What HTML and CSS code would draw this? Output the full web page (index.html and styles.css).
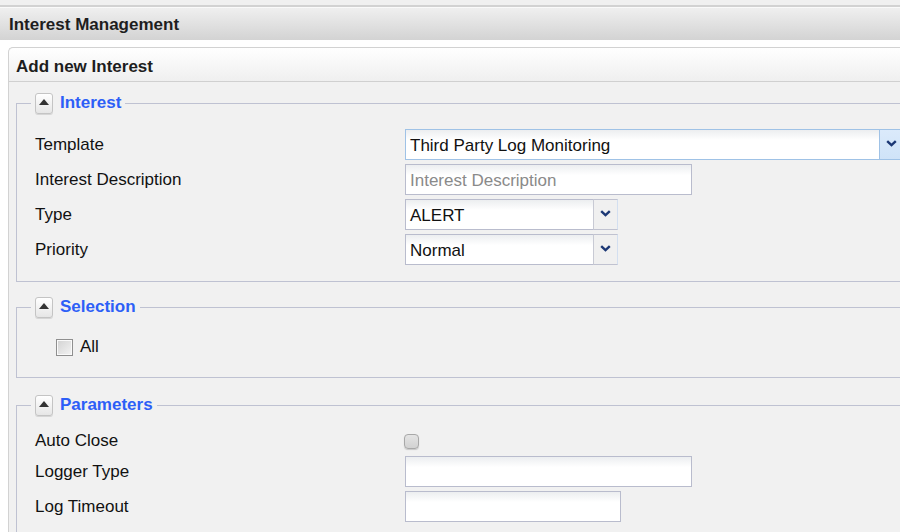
FILE: index.html
```html
<!DOCTYPE html>
<html>
<head>
<meta charset="utf-8">
<link rel="stylesheet" href="styles.css">
</head>
<body>
<div class="app">
  <div class="titlebar">Interest Management</div>
  <div class="panel">
    <div class="panel-head">Add new Interest</div>
    <div class="panel-body">
      <fieldset class="fs fs-interest">
        <legend><span class="toggle"><span class="tri"></span></span><span class="legend-text">Interest</span></legend>
        <div class="row">
          <div class="label">Template</div>
          <div class="combo combo-wide focused">
            <div class="field">Third Party Log Monitoring</div>
            <div class="dd"><svg width="11" height="7" viewBox="0 0 11 7"><path d="M1.2 1.2 L5.5 5.2 L9.8 1.2" fill="none" stroke="#1c3875" stroke-width="2.4"/></svg></div>
          </div>
        </div>
        <div class="row">
          <div class="label">Interest Description</div>
          <div class="field text w286 placeholder">Interest Description</div>
        </div>
        <div class="row">
          <div class="label">Type</div>
          <div class="combo combo-small">
            <div class="field">ALERT</div>
            <div class="dd"><svg width="11" height="7" viewBox="0 0 11 7"><path d="M1.2 1.2 L5.5 5.2 L9.8 1.2" fill="none" stroke="#1c3875" stroke-width="2.4"/></svg></div>
          </div>
        </div>
        <div class="row">
          <div class="label">Priority</div>
          <div class="combo combo-small">
            <div class="field">Normal</div>
            <div class="dd"><svg width="11" height="7" viewBox="0 0 11 7"><path d="M1.2 1.2 L5.5 5.2 L9.8 1.2" fill="none" stroke="#1c3875" stroke-width="2.4"/></svg></div>
          </div>
        </div>
      </fieldset>

      <fieldset class="fs fs-selection">
        <legend><span class="toggle"><span class="tri"></span></span><span class="legend-text">Selection</span></legend>
        <div class="check-row">
          <span class="checkbox"></span><span class="check-label">All</span>
        </div>
      </fieldset>

      <fieldset class="fs fs-params">
        <legend><span class="toggle"><span class="tri"></span></span><span class="legend-text">Parameters</span></legend>
        <div class="row row-check">
          <div class="label">Auto Close</div>
          <span class="checkbox-round"></span>
        </div>
        <div class="row">
          <div class="label">Logger Type</div>
          <div class="field text w286"></div>
        </div>
        <div class="row">
          <div class="label">Log Timeout</div>
          <div class="field text w215"></div>
        </div>
      </fieldset>
    </div>
  </div>
</div>
</body>
</html>
```

FILE: styles.css
```css
html, body {
  margin: 0;
  padding: 0;
  background: #ffffff;
  overflow: hidden;
  font-family: "Liberation Sans", Arial, sans-serif;
  color: #111;
}

.app {
  border-top: 5px solid #f0f0f0;
  width: 940px;
}

.titlebar {
  border-top: 2px solid #d2d2d2;
  height: 35px;
  box-sizing: border-box;
  padding: 8px 0 0 9px;
  background: linear-gradient(#f0f0f0, #d3d3d3);
  font-size: 17px;
  font-weight: bold;
  color: #1e1e1e;
  box-shadow: inset 0 1px 0 #fafafa;
}

.panel {
  margin: 7px 0 0 8px;
  border: 1px solid #d2d2d2;
  border-right: none;
  border-radius: 5px 0 0 0;
  background: #f1f1f1;
  height: 600px;
}

.panel-head {
  height: 34px;
  box-sizing: border-box;
  padding: 9px 0 0 7px;
  background: linear-gradient(#ffffff, #efefef);
  border-bottom: 1px solid #d0d0d0;
  border-radius: 5px 0 0 0;
  font-size: 17px;
  font-weight: bold;
  color: #1e1e1e;
}

.panel-body {
  padding: 10px 0 0 7px;
}

.fs {
  margin: 0;
  border: 1px solid #bfc2d2;
  border-right: none;
  padding: 0 0 0 14px;
  min-width: 0;
}

.fs legend {
  padding: 0 4px;
  display: flex;
  align-items: center;
  height: 22px;
}

.toggle {
  width: 16px;
  height: 19px;
  border: 1px solid #c4c4c4;
  border-radius: 3px;
  background: linear-gradient(#ffffff, #e6e6e6);
  box-shadow: 0 1px 0 #d6d6d6;
  display: flex;
  align-items: center;
  justify-content: center;
}

.tri {
  width: 0;
  height: 0;
  border-left: 5px solid transparent;
  border-right: 5px solid transparent;
  border-bottom: 6px solid #333;
  margin-top: -2px;
}

.legend-text {
  margin-left: 7px;
  font-size: 17px;
  font-weight: bold;
  color: #2d5ff7;
}

.row {
  display: flex;
  align-items: center;
  height: 31px;
  margin-bottom: 4px;
  padding-left: 4px;
}

.fs-interest .row:first-of-type {
  margin-top: 15px;
}

.fs-interest {
  padding-bottom: 12px;
}

.label {
  width: 370px;
  font-size: 17px;
  color: #111;
}

.field {
  box-sizing: border-box;
  height: 31px;
  border: 1px solid #b9bccd;
  background: linear-gradient(#eceef0, #ffffff 35%);
  font-size: 17px;
  padding: 6px 0 0 4px;
  color: #111;
  white-space: nowrap;
}

.placeholder {
  color: #8a8a8a;
}

.w286 { width: 287px; }
.w215 { width: 216px; }

.combo {
  display: flex;
}

.combo .field {
  flex: 1;
}

.combo-wide {
  width: 500px;
}

.combo-small {
  width: 213px;
}

.dd {
  box-sizing: border-box;
  width: 25px;
  height: 31px;
  border: 1px solid #c0c2d0;
  border-left: 1px solid #c8cad4;
  background: #f0f0f0;
  display: flex;
  align-items: center;
  justify-content: center;
  padding-bottom: 3px;
}

.combo-small .dd {
  border-right: 1px solid #d3dff0;
}

.combo-small .field {
  border-right: none;
}

.focused .field {
  border-color: #9fc2e6;
  border-right: none;
}

.focused .dd {
  width: 26px;
  background: linear-gradient(#dbeafb, #cfe3f8);
  border-color: #9fc2e6;
  justify-content: flex-start;
  padding-left: 6px;
}

.fs-selection {
  margin-top: 14px;
}

.check-row {
  display: flex;
  align-items: center;
  margin: 19px 0 0 25px;
  height: 20px;
  padding-bottom: 20px;
}

.checkbox {
  box-sizing: border-box;
  width: 17px;
  height: 17px;
  border: 1px solid #8f8f8f;
  background: linear-gradient(135deg, #d2d2d2, #f4f4f4);
  box-shadow: inset 0 0 0 1px #fafafa;
}

.check-label {
  margin-left: 7px;
  font-size: 17px;
  color: #111;
}

.fs-params {
  margin-top: 16px;
  padding-bottom: 20px;
}

.row-check {
  height: 20px;
  margin-top: 15px;
  margin-bottom: 5px;
}

.checkbox-round {
  box-sizing: border-box;
  width: 15px;
  height: 15px;
  margin-left: -1px;
  border: 1px solid #a8a8a8;
  border-radius: 4px;
  background: linear-gradient(#e4e4e4, #d2d2d2);
  box-shadow: 0 1px 1px #c8c8c8;
}
```
